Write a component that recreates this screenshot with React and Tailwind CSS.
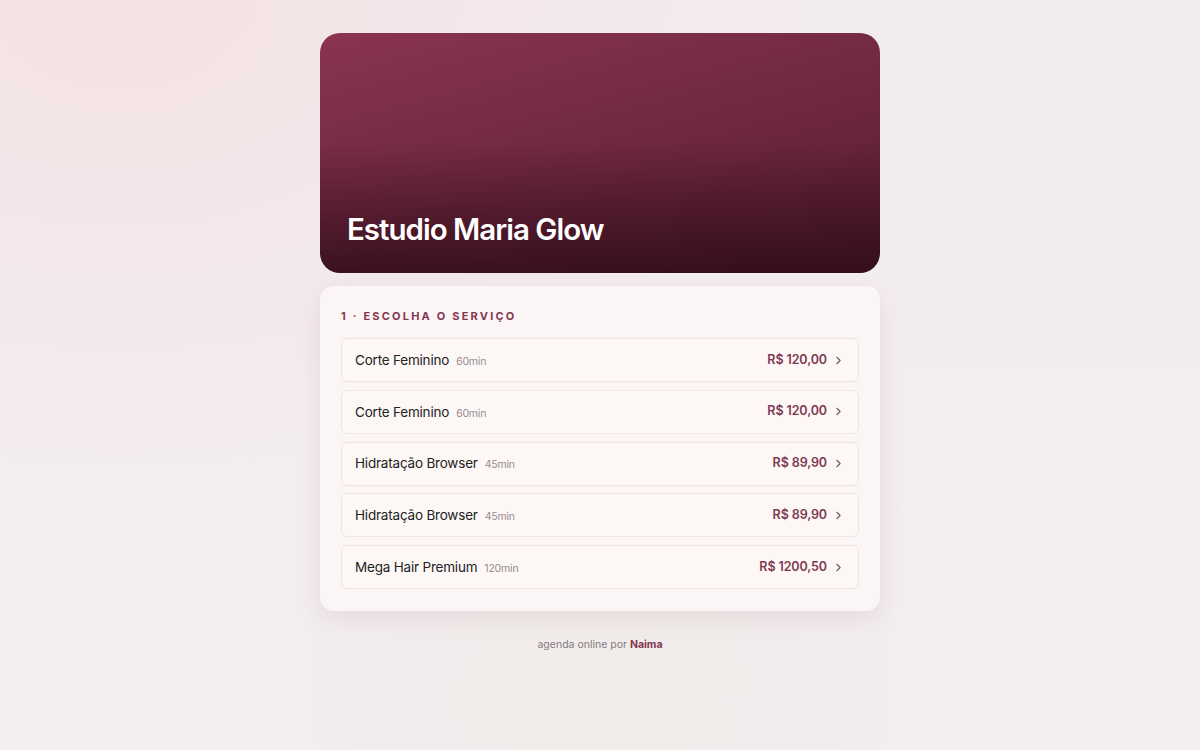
import { ChevronRight } from 'lucide-react'

const SERVICES = [
  { name: 'Corte Feminino', duration: '60min', price: 'R$ 120,00' },
  { name: 'Corte Feminino', duration: '60min', price: 'R$ 120,00' },
  { name: 'Hidratação Browser', duration: '45min', price: 'R$ 89,90' },
  { name: 'Hidratação Browser', duration: '45min', price: 'R$ 89,90' },
  { name: 'Mega Hair Premium', duration: '120min', price: 'R$ 1200,50' },
]

function ServiceRow({ service }) {
  return (
    <button className="w-full h-[44px] flex items-center justify-between px-[13px] rounded-[6px] border border-[#efe4e4] bg-[#fdf8f6] text-left">
      <div className="flex items-baseline gap-[7px]">
        <span className="text-[13.5px] text-[#222] tracking-[-0.2px]">{service.name}</span>
        <span className="text-[10.5px] text-[#978a8e] tracking-[-0.2px]">{service.duration}</span>
      </div>
      <div className="flex items-center gap-[5px]">
        <span className="text-[12.5px] font-semibold text-[#7d3a52] tracking-[-0.1px]">{service.price}</span>
        <ChevronRight size={13} strokeWidth={2} className="text-[#6b5a60]" />
      </div>
    </button>
  )
}

export default function App() {
  return (
    <div
      className="min-h-[750px] w-full bg-[radial-gradient(ellipse_at_10%_0%,#f4e2e4_0%,transparent_45%),radial-gradient(ellipse_at_50%_100%,#f1ecea_0%,transparent_50%),linear-gradient(#f3ecee,#f4eef0)]"
      style={{ fontFamily: 'Inter, "Noto Sans", sans-serif' }}
    >
      <div className="w-[560px] mx-auto pt-[33px] flex flex-col">
        <div className="h-[240px] rounded-[20px] flex items-end px-[27px] pb-[26px] bg-[linear-gradient(180deg,transparent_45%,rgba(30,5,12,0.6)_100%),linear-gradient(165deg,#8a3450_0%,#722942_45%,#551c30_100%)]">
          <h1 className="text-[29.5px] leading-[36px] font-semibold tracking-[-1px] text-white">Estudio Maria Glow</h1>
        </div>

        <div className="mt-[13px] rounded-[14px] bg-[#fbf6f5] shadow-[0_8px_24px_rgba(120,60,80,0.10)] px-[21px] pt-[22px] pb-[22px]">
          <div className="text-[11px] font-bold tracking-[2.2px] text-[#843650] leading-[16px]">1 · ESCOLHA O SERVIÇO</div>
          <div className="mt-[14px] flex flex-col gap-[7.75px]">
            {SERVICES.map((s, i) => (
              <ServiceRow key={i} service={s} />
            ))}
          </div>
        </div>

        <p className="mt-[26px] text-center text-[10.5px] text-[#857a7e]">
          agenda online por <span className="font-bold text-[#843650]">Naima</span>
        </p>
      </div>
    </div>
  )
}
